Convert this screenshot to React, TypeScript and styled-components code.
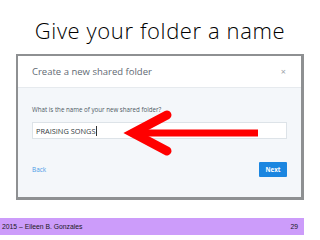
import React from "react";
import styled, { createGlobalStyle } from "styled-components";

const Global = createGlobalStyle`
  html, body { margin: 0; padding: 0; background: #ffffff; }
  body { width: 320px; height: 240px; overflow: hidden; }
`;

const Slide = styled.div`
  width: 320px;
  height: 240px;
  display: flex;
  flex-direction: column;
  background: #ffffff;
`;

const Heading = styled.h1`
  margin: 0;
  height: 54px;
  display: flex;
  align-items: center;
  justify-content: center;
  padding-top: 5px;
  box-sizing: border-box;
  font-family: "Open Sans", sans-serif;
  font-weight: 350;
  font-size: 22px;
  letter-spacing: 0.6px;
  color: #000000;
`;

const Frame = styled.div`
  position: relative;
  margin-left: 16px;
  width: 288px;
  height: 146px;
  box-sizing: border-box;
  border: 2px solid #8e9092;
  border-bottom-width: 3px;
  border-right-width: 3px;
  display: flex;
  flex-direction: column;
  background: #f4f7fa;
`;

const DialogHeader = styled.div`
  height: 31px;
  flex: none;
  background: #ffffff;
  border-bottom: 1px solid #e6eaee;
  display: flex;
  align-items: center;
  justify-content: space-between;
  padding: 0 14px 0 14px;
  font-family: "Open Sans", sans-serif;
  font-size: 9.5px;
  color: #5f6a73;
`;

const Close = styled.span`
  font-family: "Open Sans", sans-serif;
  font-size: 9px;
  color: #9aa3aa;
  margin-right: 1px;
`;

const DialogBody = styled.div`
  flex: 1;
  display: flex;
  flex-direction: column;
  padding: 17px 14px 0 14px;
`;

const Label = styled.div`
  font-family: "Open Sans", sans-serif;
  font-size: 6.2px;
  color: #4e5a64;
  height: 10px;
  line-height: 10px;
`;

const Input = styled.div`
  margin-top: 7px;
  width: 255px;
  height: 17px;
  box-sizing: border-box;
  background: #ffffff;
  border: 1px solid #dde3e8;
  display: flex;
  align-items: center;
  padding-left: 3px;
  font-family: "Open Sans", sans-serif;
  font-size: 7.4px;
  color: #333b42;
`;

const Caret = styled.span`
  display: inline-block;
  width: 1px;
  height: 10px;
  background: #333;
  margin-left: 0.5px;
`;

const Actions = styled.div`
  margin-top: 23px;
  width: 255px;
  display: flex;
  align-items: center;
  justify-content: space-between;
`;

const BackLink = styled.span`
  font-family: "Open Sans", sans-serif;
  font-size: 6.4px;
  color: #4a9be6;
`;

const NextButton = styled.span`
  width: 28px;
  height: 15px;
  background: #1b86e0;
  border-radius: 1px;
  display: flex;
  align-items: center;
  justify-content: center;
  font-family: "Open Sans", sans-serif;
  font-weight: 700;
  font-size: 6.2px;
  color: #ffffff;
`;

const Arrow = styled.svg`
  position: absolute;
  left: 92px;
  top: 52px;
  width: 155px;
  height: 50px;
  overflow: visible;
`;

const Footer = styled.div`
  margin-top: 18px;
  width: 304px;
  height: 17px;
  background: #cc9cfa;
  display: flex;
  align-items: center;
  justify-content: space-between;
  padding: 0 6px 0 2px;
  box-sizing: border-box;
  font-family: "Liberation Sans", Arial, sans-serif;
  font-size: 6.8px;
  color: #1a1a1a;
`;

export default function App() {
  return (
    <>
      <Global />
      <Slide>
        <Heading>Give your folder a name</Heading>
        <Frame>
          <DialogHeader>
            <span>Create a new shared folder</span>
            <Close>×</Close>
          </DialogHeader>
          <DialogBody>
            <Label>What is the name of your new shared folder?</Label>
            <Input>
              PRAISING SONGS<Caret />
            </Input>
            <Actions>
              <BackLink>Back</BackLink>
              <NextButton>Next</NextButton>
            </Actions>
          </DialogBody>
          <Arrow viewBox="0 0 155 50">
            <path d="M26 25 L148 25" stroke="#ff0000" strokeWidth="7" strokeLinecap="butt" fill="none" />
            <path d="M57 7 L23 25 L57 43" stroke="#ff0000" strokeWidth="9" strokeLinecap="round" strokeLinejoin="miter" fill="none" />
          </Arrow>
        </Frame>
        <Footer>
          <span>2015 – Eileen B. Gonzales</span>
          <span>29</span>
        </Footer>
      </Slide>
    </>
  );
}
